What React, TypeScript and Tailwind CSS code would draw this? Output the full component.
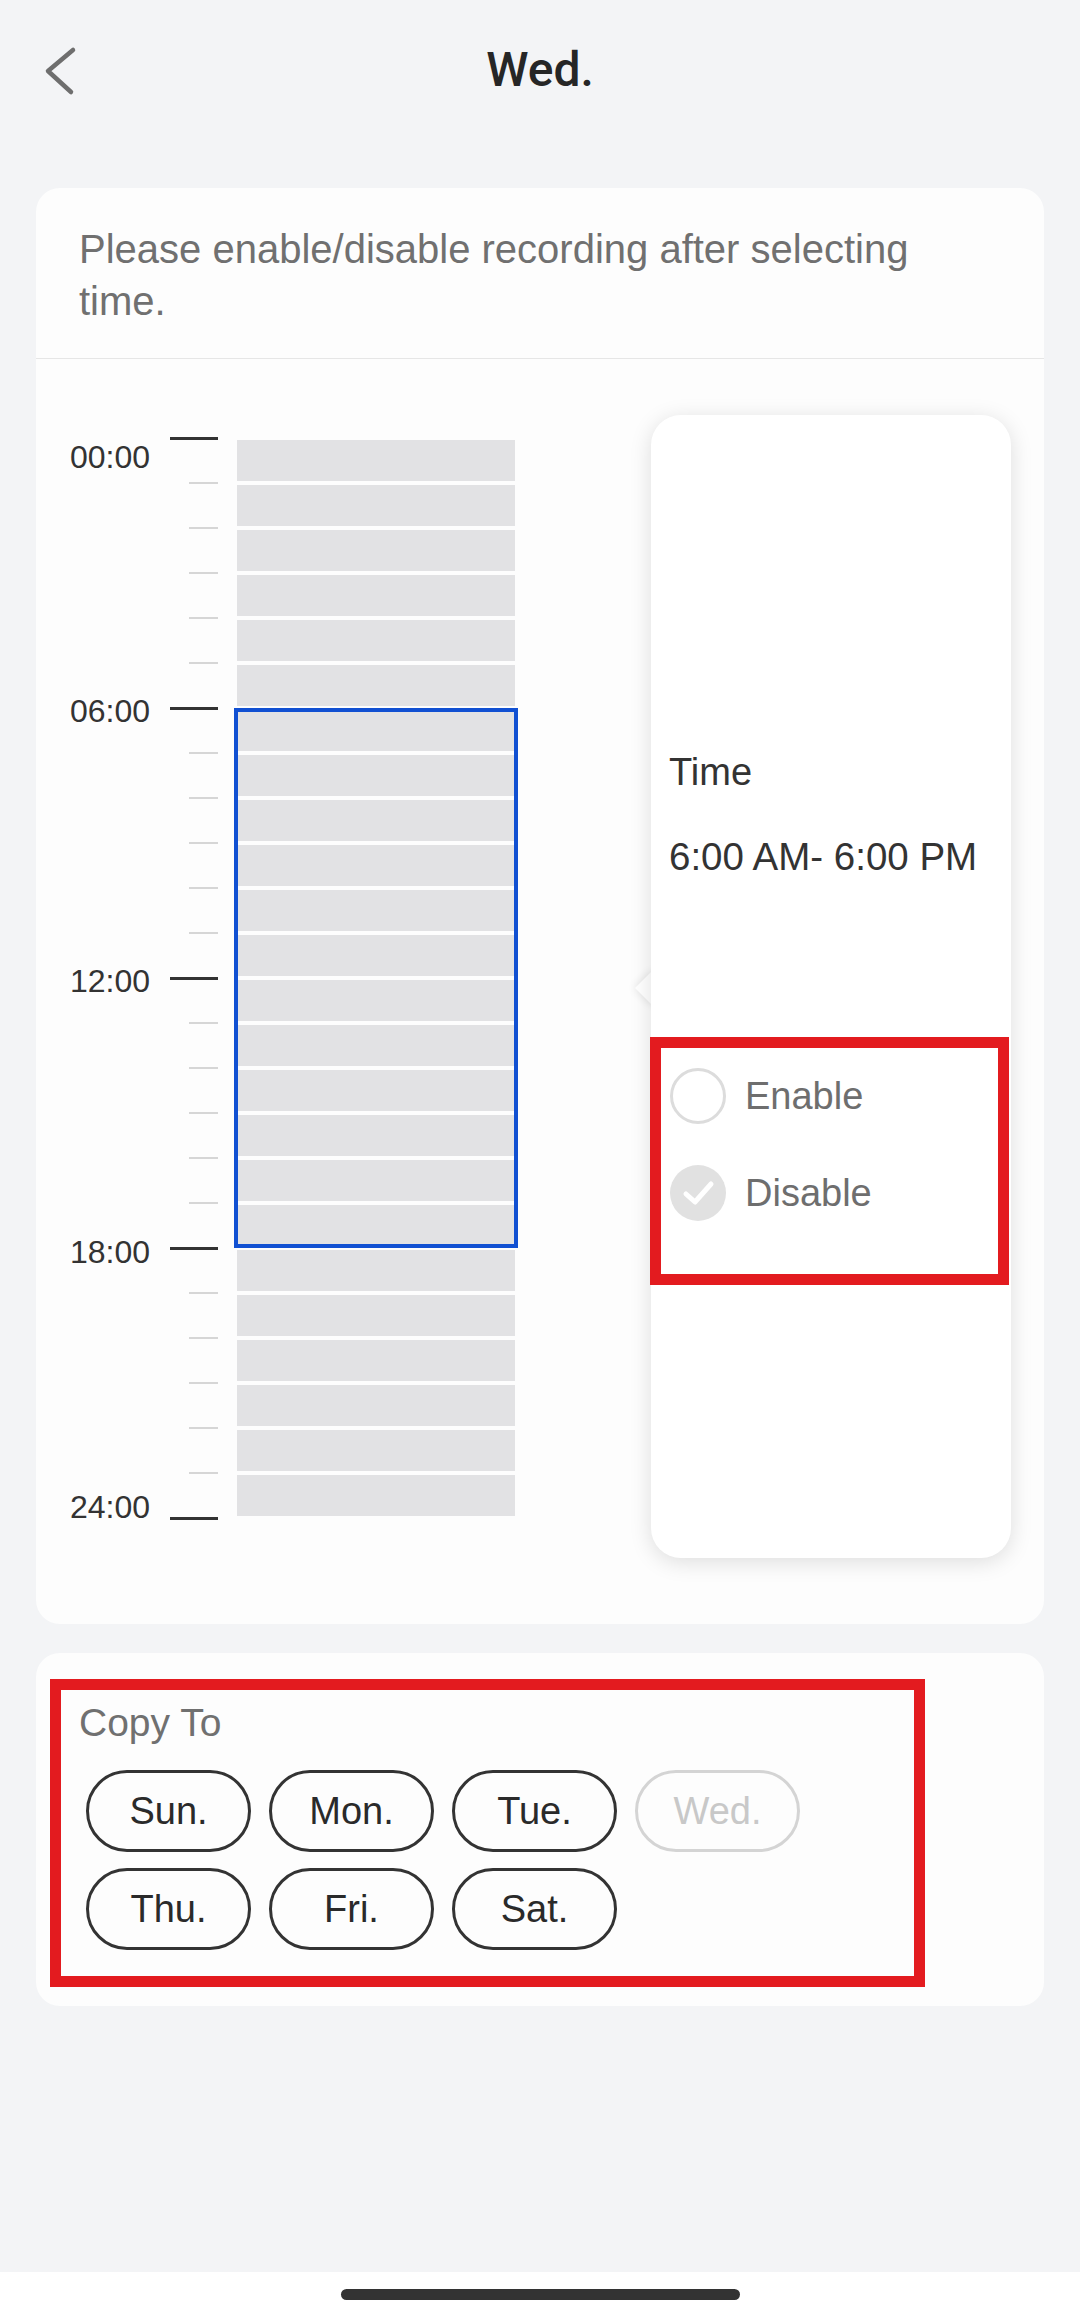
const labels = [
  { t: "00:00", cls: "" },
  { t: "06:00", cls: "mt-[218px]" },
  { t: "12:00", cls: "mt-[234px]" },
  { t: "18:00", cls: "mt-[235px]" },
  { t: "24:00", cls: "mt-[219px]" },
];
const days = [
  { name: "Sun.", disabled: false },
  { name: "Mon.", disabled: false },
  { name: "Tue.", disabled: false },
  { name: "Wed.", disabled: true },
  { name: "Thu.", disabled: false },
  { name: "Fri.", disabled: false },
  { name: "Sat.", disabled: false },
];

export default function App() {
  return (
    <div className="flex h-[2316px] w-[1080px] flex-col bg-[#f3f4f6] font-['Liberation_Sans',sans-serif]">
      <div className="flex flex-1 flex-col px-[36px]">
        {/* Header */}
        <div className="flex h-[188px] items-start pt-[46px]">
          <div className="ml-[8px] w-[60px]">
            <svg width="34" height="50" viewBox="0 0 34 50" fill="none">
              <polyline
                points="29,4 4,25 27,46"
                stroke="#6e6e6e"
                strokeWidth="4.5"
                strokeLinecap="round"
                strokeLinejoin="round"
              />
            </svg>
          </div>
          <h1 className="flex-1 text-center font-['Roboto',sans-serif] text-[48px] font-medium leading-[48px] text-[#262626]">
            Wed.
          </h1>
          <div className="w-[68px]" />
        </div>

        {/* Card 1 */}
        <div className="relative rounded-[24px] bg-[#fdfdfd]">
          <p className="pl-[43px] pr-[84px] pt-[35px] pb-[31px] text-[40px] leading-[52px] text-[#707070]">
            Please enable/disable recording after selecting time.
          </p>
          <div className="h-px bg-[#e6e6e6]" />
          <div className="flex pl-[34px] pt-[78px] pb-[99px]">
            <div className="flex h-[1088px] w-[100px] flex-col pt-[2px] text-[32px] leading-[36px] text-[#333]">
              {labels.map((l) => (
                <span key={l.t} className={l.cls}>
                  {l.t}
                </span>
              ))}
            </div>
            <div className="flex w-[48px] flex-col">
              {Array.from({ length: 25 }).map((_, i) => (
                <div key={i} className={i < 24 ? "h-[45px]" : ""}>
                  {i % 6 === 0 ? (
                    <div className="h-[3px] w-[48px] bg-[#333]" />
                  ) : (
                    <div className="ml-auto h-[2px] w-[29px] bg-[#d6d6d6]" />
                  )}
                </div>
              ))}
            </div>
            <div className="relative ml-[19px] flex w-[278px] flex-col gap-[4px] pt-[3px]">
              {Array.from({ length: 24 }).map((_, i) => (
                <div key={i} className="h-[41px] bg-[#e2e2e4]" />
              ))}
              <div className="absolute left-[-3px] top-[271px] h-[540px] w-[284px] border-[4px] border-[#1150d2]" />
            </div>
          </div>

          {/* Popover */}
          <div className="absolute left-[615px] top-[227px] z-10 h-[1143px] w-[360px]">
            <div className="absolute left-[-11px] top-[561px] h-[24px] w-[24px] rotate-45 bg-white shadow-[0_0_10px_rgba(0,0,0,0.12)]" />
            <div className="relative h-full rounded-[30px] bg-white pl-[18px] pt-[335px] shadow-[0_4px_22px_rgba(0,0,0,0.13)]">
              <div className="text-[38px] leading-[44px] text-[#333]">Time</div>
              <div className="mt-[41px] text-[38.5px] leading-[44px] text-[#333]">6:00 AM- 6:00 PM</div>
              <div className="ml-[-19px] mt-[158px] w-[359px] border-[11px] border-[#e31b1f] pl-[9px] pt-[20px] pb-[53px]">
                <div className="flex flex-col gap-[41px]">
                  <div className="flex items-center gap-[19px]">
                    <div className="h-[56px] w-[56px] rounded-full border-[3px] border-[#dcdcdc] bg-white" />
                    <span className="text-[38px] leading-[44px] text-[#6e6e6e]">Enable</span>
                  </div>
                  <div className="flex items-center gap-[19px]">
                    <div className="flex h-[56px] w-[56px] items-center justify-center rounded-full bg-[#e1e1e1]">
                      <svg width="56" height="56" viewBox="0 0 56 56" fill="none">
                        <polyline
                          points="16,29 25,37 41,19"
                          stroke="#ffffff"
                          strokeWidth="5"
                          strokeLinecap="round"
                          strokeLinejoin="round"
                        />
                      </svg>
                    </div>
                    <span className="text-[38px] leading-[44px] text-[#6e6e6e]">Disable</span>
                  </div>
                </div>
              </div>
            </div>
          </div>
        </div>

        {/* Card 2 */}
        <div className="mt-[29px] rounded-[24px] bg-[#fdfdfd] pl-[14px] pt-[26px] pb-[19px]">
          <div className="w-[875px] border-[11px] border-[#e31b1f] pl-[18px] pt-[10px] pb-[26px]">
            <div className="text-[39px] leading-[46px] text-[#707070]">Copy To</div>
            <div className="ml-[7px] mt-[24px] flex flex-wrap gap-x-[18px] gap-y-[16px]">
              {days.map((d) => (
                <div
                  key={d.name}
                  className={
                    d.disabled
                      ? "flex h-[82px] w-[165px] items-center justify-center rounded-full border-[3px] border-[#d4d4d4] text-[38px] text-[#c8c8c8]"
                      : "flex h-[82px] w-[165px] items-center justify-center rounded-full border-[3px] border-[#333] text-[38px] text-[#2a2a2a]"
                  }
                >
                  {d.name}
                </div>
              ))}
            </div>
          </div>
        </div>
      </div>

      {/* Home indicator */}
      <div className="flex h-[44px] justify-center bg-white pt-[17px]">
        <div className="h-[11px] w-[399px] rounded-full bg-[#333]" />
      </div>
    </div>
  );
}
